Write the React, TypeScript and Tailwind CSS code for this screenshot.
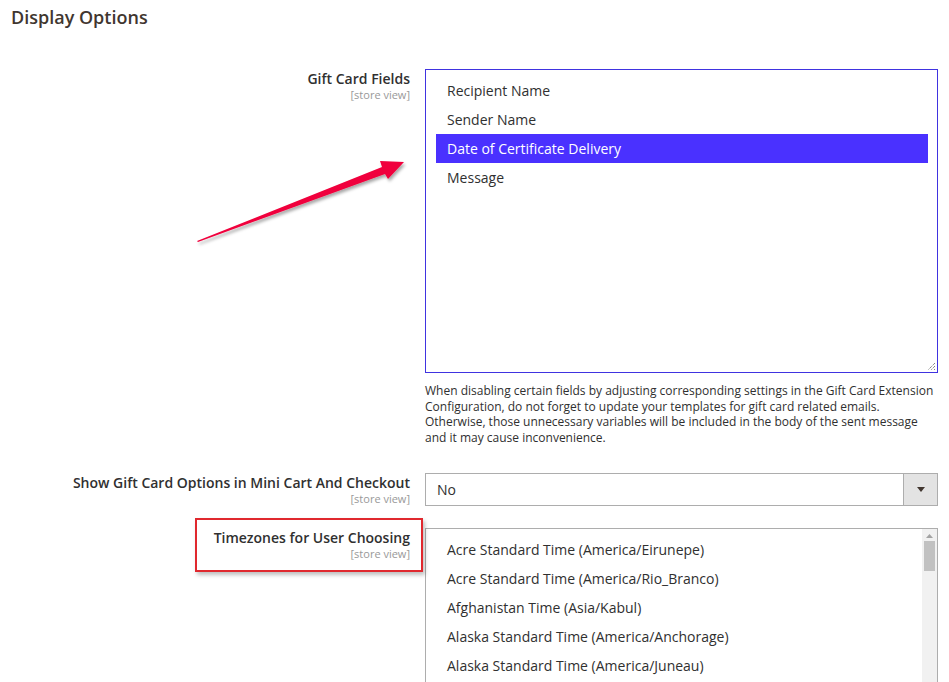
import React from "react";

const giftFields = ["Recipient Name", "Sender Name", "Date of Certificate Delivery", "Message"];
const timezones = [
  "Acre Standard Time (America/Eirunepe)",
  "Acre Standard Time (America/Rio_Branco)",
  "Afghanistan Time (Asia/Kabul)",
  "Alaska Standard Time (America/Anchorage)",
  "Alaska Standard Time (America/Juneau)",
];

function Label({ title }: { title: string }) {
  return (
    <div className="w-[410px] shrink-0 text-right">
      <div className="text-[14px] leading-[18px] font-semibold text-[#303030]">{title}</div>
      <div className="text-[11px] leading-[14px] text-[#999]">[store view]</div>
    </div>
  );
}

export default function App() {
  return (
    <div
      className="relative w-[949px] h-[682px] overflow-hidden bg-white text-[#303030]"
      style={{ fontFamily: '"Open Sans", "Noto Sans", sans-serif' }}
    >
      <div className="pl-[11px] pt-[7px] text-[18px] leading-[20px] font-semibold text-[#41362f]">
        Display Options
      </div>

      {/* Gift Card Fields */}
      <div className="flex mt-[42px]">
        <div className="pt-[1px]">
          <Label title="Gift Card Fields" />
        </div>
        <div className="ml-[15px] w-[513px]">
          <div className="relative h-[304px] border border-[#4033e0] pt-[6px] pl-[10px] pr-[9px]">
            {giftFields.map((f, i) => (
              <div
                key={f}
                className={
                  "h-[29px] flex items-center pl-[11px] text-[14px] " +
                  (i === 2 ? "bg-[#4a31ff] text-white" : "text-[#303030]")
                }
              >
                {f}
              </div>
            ))}
            <svg className="absolute right-[1px] bottom-[1px]" width="10" height="10" viewBox="0 0 10 10">
              <path d="M9 2 L2 9 M9 5 L5 9 M9 8 L8 9" stroke="#555" strokeWidth="1" strokeDasharray="1 1" />
            </svg>
          </div>
          <div className="mt-[10px] text-[12px] leading-[15.6px] text-[#303030]">
            When disabling certain fields by adjusting corresponding settings in the Gift Card Extension
            Configuration, do not forget to update your templates for gift card related emails. Otherwise,
            those unnecessary variables will be included in the body of the sent message and it may cause
            inconvenience.
          </div>
        </div>
      </div>

      {/* Show options select */}
      <div className="flex mt-[28px]">
        <div className="pt-[1px]">
          <Label title="Show Gift Card Options in Mini Cart And Checkout" />
        </div>
        <div className="ml-[15px] w-[513px] h-[33px] border border-[#adadad] flex">
          <div className="flex-1 flex items-center pl-[11px] text-[14px]">No</div>
          <div className="w-[34px] border-l border-[#adadad] bg-[#e3e3e3] flex items-center justify-center">
            <svg width="8" height="6" viewBox="0 0 8 6">
              <path d="M0 0 H8 L4 5 Z" fill="#41362f" />
            </svg>
          </div>
        </div>
      </div>

      {/* Timezones */}
      <div className="flex mt-[22px]">
        <div className="pt-[1px]">
          <Label title="Timezones for User Choosing" />
        </div>
        <div className="ml-[15px] w-[513px] h-[200px] border border-[#adadad] flex">
          <div className="flex-1 pt-[6px] pl-[10px]">
            {timezones.map((t) => (
              <div key={t} className="h-[29px] flex items-center pl-[11px] text-[14px]">
                {t}
              </div>
            ))}
          </div>
          <div className="w-[15px] bg-[#f1f1f1] flex flex-col items-center">
            <svg className="mt-[5px]" width="7" height="4" viewBox="0 0 7 4">
              <path d="M0 4 L3.5 0 L7 4 Z" fill="#a3a3a3" />
            </svg>
            <div className="mt-[3px] w-[11px] h-[30px] bg-[#c1c1c1]" />
          </div>
        </div>
      </div>

      {/* Red highlight box */}
      <div
        className="absolute left-[195px] top-[518px] w-[228px] h-[54px] border-2 border-[#e0282e]"
        style={{ boxShadow: "2px 3px 4px rgba(0,0,0,0.25)" }}
      />

      {/* Arrow */}
      <svg className="absolute left-0 top-0" width="949" height="682" viewBox="0 0 949 682">
        <defs>
          <filter id="sh" x="-10%" y="-10%" width="130%" height="140%">
            <feDropShadow dx="1.5" dy="2.5" stdDeviation="1.5" floodColor="#000" floodOpacity="0.35" />
          </filter>
        </defs>
        <path
          d="M197 241 L382 167 L380 161 L404 162 L388 179 L385 174 L198 242 Z"
          fill="#f0033c"
          filter="url(#sh)"
        />
      </svg>
    </div>
  );
}
